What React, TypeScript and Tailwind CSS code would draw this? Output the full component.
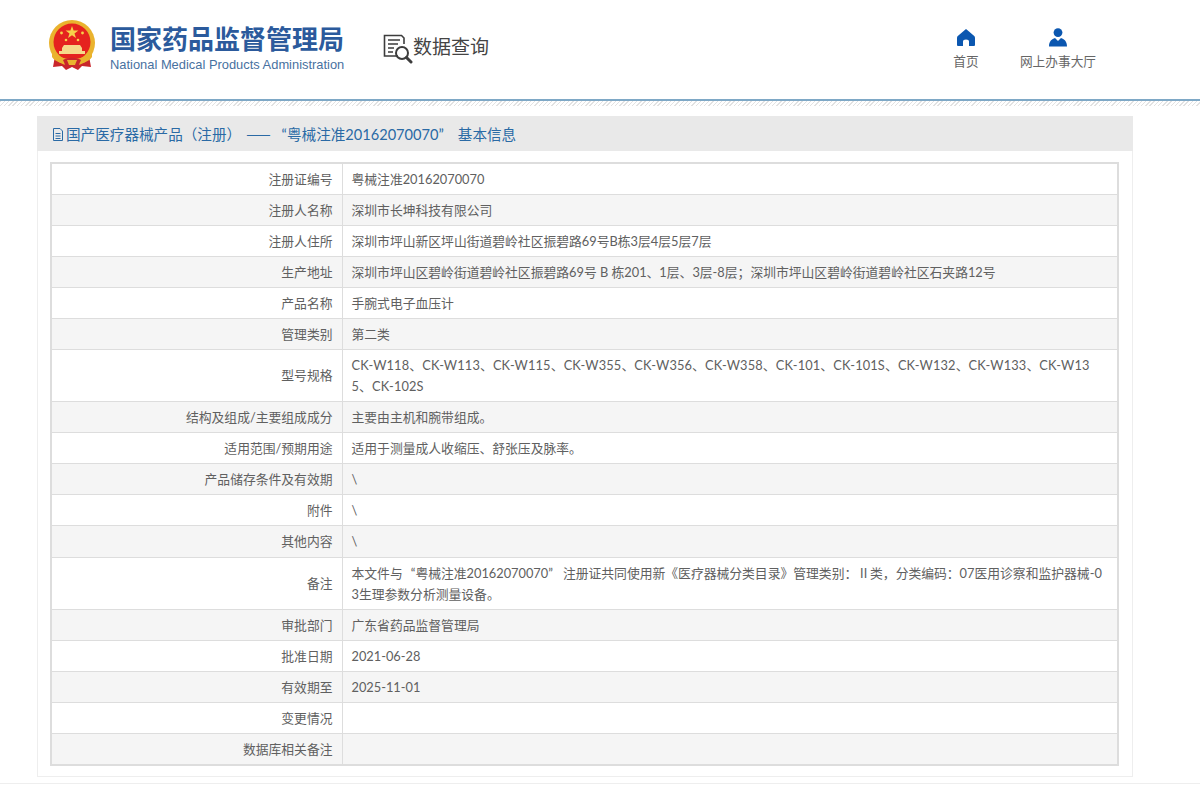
import type { ReactNode } from "react";

function L({ children }: { children: ReactNode }) {
  return <span className="ml-[8px]">{children}</span>;
}
function R({ children }: { children: ReactNode }) {
  return <span className="mr-[10px]">{children}</span>;
}

const rows: [string, ReactNode][] = [
  ["注册证编号", "粤械注准20162070070"],
  ["注册人名称", "深圳市长坤科技有限公司"],
  ["注册人住所", "深圳市坪山新区坪山街道碧岭社区振碧路69号B栋3层4层5层7层"],
  ["生产地址", "深圳市坪山区碧岭街道碧岭社区振碧路69号 B 栋201、1层、3层-8层；深圳市坪山区碧岭街道碧岭社区石夹路12号"],
  ["产品名称", "手腕式电子血压计"],
  ["管理类别", "第二类"],
  ["型号规格", <span className="tracking-[0.15px]">CK-W118、CK-W113、CK-W115、CK-W355、CK-W356、CK-W358、CK-101、CK-101S、CK-W132、CK-W133、CK-W13<br />5、CK-102S</span>],
  ["结构及组成/主要组成成分", "主要由主机和腕带组成。"],
  ["适用范围/预期用途", "适用于测量成人收缩压、舒张压及脉率。"],
  ["产品储存条件及有效期", "\\"],
  ["附件", "\\"],
  ["其他内容", "\\"],
  ["备注", <>本文件与<L>“</L>粤械注准20162070070<R>”</R>注册证共同使用新《医疗器械分类目录》管理类别：Ⅱ类，分类编码：07医用诊察和监护器械-03生理参数分析测量设备。</>],
  ["审批部门", "广东省药品监督管理局"],
  ["批准日期", "2021-06-28"],
  ["有效期至", "2025-11-01"],
  ["变更情况", ""],
  ["数据库相关备注", ""],
];

function Emblem() {
  return (
    <svg width="48" height="52" viewBox="0 0 48 52">
      <path d="M7 36 L5 47 L14 46 L18 50 L24 47 L30 50 L34 46 L43 47 L41 36 Z" fill="#c9262c" />
      <circle cx="24" cy="23" r="23" fill="#eab32e" />
      <circle cx="24" cy="22" r="18.5" fill="#e5231f" />
      <path d="M24 6 L25.6 10.6 L30.4 10.6 L26.5 13.4 L28 18 L24 15.2 L20 18 L21.5 13.4 L17.6 10.6 L22.4 10.6 Z" fill="#f7d24a" />
      <circle cx="13.5" cy="13" r="1.4" fill="#f7d24a" />
      <circle cx="34.5" cy="13" r="1.4" fill="#f7d24a" />
      <circle cx="18" cy="20" r="1.3" fill="#f7d24a" />
      <circle cx="30" cy="20" r="1.3" fill="#f7d24a" />
      <path d="M16 25 H32 L34 28 V31 H37 V34 H11 V31 H14 V28 Z" fill="#f6d98a" />
      <path d="M4 30 C10 42 38 42 44 30 L44 37 C38 47 10 47 4 37 Z" fill="#eab32e" />
      <path d="M15 40 C20 37 28 37 33 40 L30 47 H18 Z" fill="#c9262c" />
      <path d="M19 40 H29 L27 45 H21 Z" fill="#eab32e" />
    </svg>
  );
}

function SearchDoc() {
  return (
    <svg width="30" height="30" viewBox="0 0 30 30" fill="none" stroke="#3d3d3d">
      <path d="M15 22 H1.5 V1.5 H18.5 L21 4 V10" strokeWidth="1.6" />
      <path d="M5 6 H17 M5 10 H15 M5 14 H11 M5 18 H10" strokeWidth="1.6" />
      <circle cx="19" cy="19" r="6" strokeWidth="2" />
      <path d="M23.5 23.5 L28 28" strokeWidth="3" strokeLinecap="round" />
    </svg>
  );
}

export default function App() {
  return (
    <div className="min-h-[785px] overflow-hidden bg-white font-[Lato,Noto_Sans_CJK_SC,sans-serif]">
      <header className="h-[101px] border-b-2 border-[#7ea8c6] flex items-start pl-[48px]">
        <div className="mt-[20px]"><Emblem /></div>
        <div className="ml-[14px] mt-[24px] w-[236px]">
          <div className="text-[26px] leading-[30px] font-bold text-[#2b5a9c] whitespace-nowrap">国家药品监督管理局</div>
          <div className="mt-[3px] font-[Liberation_Sans,sans-serif] text-[12.9px] leading-[16px] text-[#48719f] whitespace-nowrap">National Medical Products Administration</div>
        </div>
        <div className="ml-[37px] mt-[34px] flex items-start">
          <SearchDoc />
          <span className="text-[19px] leading-[26px] text-[#444444] whitespace-nowrap">数据查询</span>
        </div>
        <nav className="ml-auto mr-[104px] mt-[29px] flex items-start text-[12.7px] text-[#666666]">
          <div className="w-[28px] mr-[40px] flex flex-col items-center">
            <svg width="18" height="17" viewBox="0 0 18 17" fill="#0b57b0"><path d="M9 0 L12 2.5 L17.2 7 Q18 7.7 18 9 V16 Q18 17 17 17 H12 V12.5 Q12 10.5 9 10.5 Q6 10.5 6 12.5 V17 H1 Q0 17 0 16 V9 Q0 7.7 .8 7 Z" /></svg>
            <span className="mt-[6px] leading-[18px] whitespace-nowrap">首页</span>
          </div>
          <div className="w-[76px] flex flex-col items-center">
            <svg width="18" height="19" viewBox="0 0 18 19" fill="#0b57b0" className="-mt-px"><circle cx="9" cy="4.6" r="4.4" /><path d="M0 18.5 C0 13 3 11 6 10 L9 13 L12 10 C15 11 18 13 18 18.5 Z" /></svg>
            <span className="mt-[5px] leading-[18px] whitespace-nowrap">网上办事大厅</span>
          </div>
        </nav>
      </header>
      <div className="h-[5px] bg-[repeating-linear-gradient(135deg,#e2e2e2_0,#e2e2e2_1px,#ffffff_1px,#ffffff_3px)]" />
      <main className="ml-[37px] mt-[10px] w-[1096px] h-[661px] border border-t-0 border-[#eeeeee]">
        <h2 className="-mx-px flex items-center h-[35px] pt-[2px] pl-[15px] bg-[#e9e9e9] text-[14.6px] font-normal text-[#2a6aa5] whitespace-nowrap">
          <svg width="12" height="13" viewBox="0 0 12 13" fill="none" stroke="#2a6aa5" className="mr-[2px]"><path d="M1.5 .5 H8 L10.5 3 V12.5 H1.5 Z M3.5 5.5 H8.5 M3.5 8 H8.5 M3.5 10.5 H8.5" /></svg>
          <span>国产医疗器械产品（注册）<span className="ml-[5px] mr-[2px] font-[Noto_Sans_CJK_SC,sans-serif]">——</span><span className="ml-[9px]">“</span>粤械注准20162070070<span className="mr-[14px]">”</span>基本信息</span>
        </h2>
        <table className="ml-[12px] mt-[11px] w-[1069px] table-fixed border-collapse border-2 border-[#dddddd] text-[12.8px] leading-[21.5px] text-[#606060]">
          <colgroup><col className="w-[291px]" /><col /></colgroup>
          <tbody>
            {rows.map(([label, value], i) => (
              <tr key={label} className={(i % 2 ? "bg-[#f5f5f5]" : "bg-white") + (i === 11 || i === 17 ? " h-[32px]" : " h-[31px]")}>
                <td className="border border-[#dddddd] pt-[2px] pr-[9px] text-right align-middle">{label}</td>
                <td className="border border-[#dddddd] pl-[9px] pr-[13px] pt-[5px] pb-[3px] align-middle break-all">{value}</td>
              </tr>
            ))}
          </tbody>
        </table>
      </main>
      <div className="mt-[6px] h-px bg-[#eeeeee]" />
    </div>
  );
}
